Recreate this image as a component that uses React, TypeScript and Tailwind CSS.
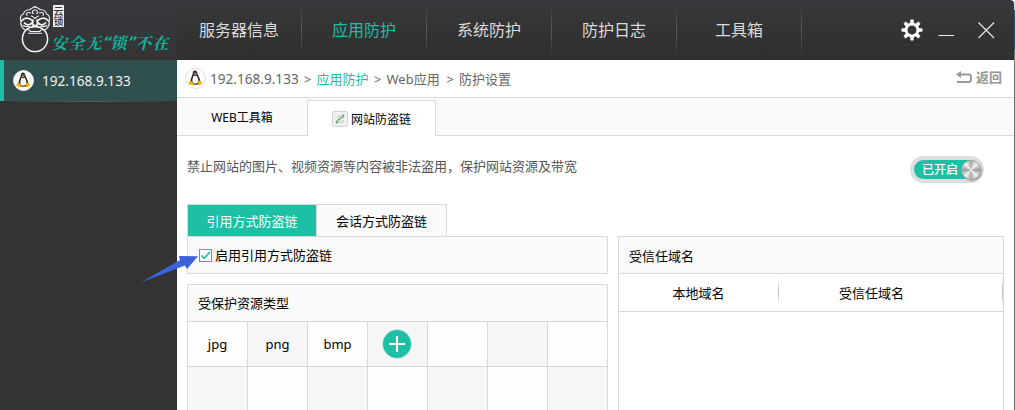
import React from "react";

const NAV = ["服务器信息", "应用防护", "系统防护", "防护日志", "工具箱"];
const CELLS = ["jpg", "png", "bmp", "+", "", "", ""];
const SLOGAN = ["安", "全", "无", "“", "锁", "”", "不", "在"];

function Tux({ ring }: { ring?: boolean }) {
  return (
    <svg width="21" height="21" viewBox="0 0 21 21" className="shrink-0">
      <circle cx="10.5" cy="10.5" r="10" fill="#fff" stroke={ring ? "#d4d4d4" : "#fff"} strokeWidth="0.8" />
      <path d="M7.8 5C7.8 1.5 12.3 1.5 12.3 5c0 2.3 3 5 3 8.200c0 2.300-2.200 3.600-4.900 3.600s-4.900-1.300-4.900-3.600c0-3.200 2.300-5.900 2.300-8.200z" fill="#1d1d1d" />
      <path d="M8.500 7.600c1.200.9 2.300.9 3.200 0c.6 1.700 1.800 3.200 1.800 5.200c0 2.300-1.500 3-3.200 3s-3-.7-3-3c0-2 .9-3.500 1.200-5.200z" fill="#f8f8f8" />
      <circle cx="9.300" cy="5" r=".6" fill="#ddd" />
      <circle cx="11" cy="5" r=".6" fill="#ddd" />
      <path d="M8.600 6.400l1.600-.7 1.500.7-1.500 1.200z" fill="#f5a700" />
      <path d="M5.500 12.300l2.900 3.200c.6 1.500-.5 2-1.700 1.700l-3-1c-.7-.4.3-1.200 0-2.200z" fill="#f7b500" />
      <path d="M13.400 13l1.800-.5 2.200 2.300c.3.700-2 2-3 2.400c-1.400.4-1.800-.7-1.300-2z" fill="#f7b500" />
    </svg>
  );
}

function Lion() {
  return (
    <svg width="32" height="48" viewBox="0 0 32 48" fill="none" stroke="#f3f3f3" strokeWidth="1.100" strokeLinecap="round" strokeLinejoin="round" className="shrink-0">
      <circle cx="16" cy="34" r="12.600" strokeWidth="1.500" />
      <path d="M6 25C2.500 22.500 1.300 19 2 16C.5 13 2 9.500 4.500 9C5 6 8 4.500 11 4.800C12 2.500 14.500 3 16 1.500C17.500 3 20 2.500 21 4.800C24 4.500 27 6 27.500 9C30 9.500 31.300 13 30 16C30.700 19 29.500 22.500 26 25" />
      <path d="M16 5c-3 0-3.500 3-1.500 3.500M16 5c3 0 3.500 3 1.500 3.500M11.500 8c-3-1.500-5 .5-3.500 2.500M20.500 8c3-1.500 5 .5 3.500 2.500M12.500 11c2 .5 2.500 2 3.500 2.500c1-.5 1.500-2 3.500-2.500" />
      <path d="M2.500 16c3-3.500 7-3.500 11-.5M29.500 16c-3-3.500-7-3.500-11-.5M5.500 18c2 2.500 5.500 2.500 7.500-.5M26.500 18c-2 2.500-5.500 2.500-7.500-.5M14 15l-.5 4.500c1 1.500 4 1.500 5 0l-.5-4.500" strokeWidth="1.700" />
      <path d="M4 20.500c2.500 2 4.500 0 6.500 1.500c2 1 3.500-.3 5.500-.3s3.500 1.300 5.500.3c2-1.500 4 .5 6.500-1.500M7.500 24c2 .5 3 1.500 4 2.500h9c1-1 2-2 4-2.500M9.500 28.300h13" />
    </svg>
  );
}

function Gear() {
  return (
    <svg width="22" height="22" viewBox="-11 -11 22 22" className="shrink-0">
      <circle r="5.900" fill="none" stroke="#fff" strokeWidth="2.800" />
      {[0, 45, 90, 135, 180, 225, 270, 315].map((a) => (
        <path key={a} d="M-2 -6.500L-1.500 -10.500H1.500L2 -6.500z" fill="#fff" transform={`rotate(${a})`} />
      ))}
    </svg>
  );
}

export default function App() {
  return (
    <div className="relative h-[410px] w-[1015px] overflow-hidden bg-white font-['Noto_Sans','Noto_Sans_CJK_SC',sans-serif] text-[13px] text-black">
      <div className="flex h-full">
        <aside className="flex w-[177px] shrink-0 flex-col rounded-tl-[3px] bg-[#333335]">
          <div className="flex h-[60px] bg-linear-to-b from-[#38393d] to-[#343437] pl-[19px] pt-[5px]">
            <Lion />
            <div className="flex flex-col pl-[2px]">
              <div className="flex h-[22px] w-[11px] items-center justify-center bg-[#eeeeee] font-['Noto_Sans_CJK_SC'] text-[10px] leading-[11px] font-medium text-[#343437] [writing-mode:vertical-rl]">
                云锁
              </div>
              <div className="mt-[4px] flex w-[116px] -skew-x-12 justify-between font-['Noto_Serif_CJK_SC','Noto_Sans_CJK_SC',sans-serif] text-[16px] leading-[23px] font-bold text-[#13b39c]">
                {SLOGAN.map((c, i) => (
                  <span key={i} className={c === "“" || c === "”" ? "w-[6px] font-['Noto_Sans']" : "w-[15px]"}>{c}</span>
                ))}
              </div>
            </div>
          </div>
          <div className="flex h-[41px] items-center border-l-4 border-[#1dbfa5] bg-[#30504f] pl-[9px]">
            <Tux />
            <span className="pl-[8px] pt-[1px] text-[13.600px] text-[#f2f2f2]">192.168.9.133</span>
          </div>
          <div className="h-px bg-linear-to-r from-[#333335] via-[#5a5b5d] to-[#333335]" />
        </aside>

        <main className="flex w-[837px] shrink-0 flex-col">
          <header className="flex h-[60px] shrink-0 rounded-tr-[4px] bg-linear-to-b from-[#38393d] via-[#333333] to-[#303030]">
            {NAV.map((n, i) => (
              <div key={n} className="flex w-[125px] items-stretch">
                <div className={i === 1 ? "flex-1 text-center text-[16px] leading-[61px] text-[#1dbfa5]" : "flex-1 text-center text-[16px] leading-[61px] text-[#dcdcdc]"}>{n}</div>
                <div className="my-[4px] w-px bg-linear-to-b from-transparent via-[#5d5d5d] to-transparent" />
              </div>
            ))}
            <div className="flex flex-1 items-center pl-[98.500px]">
              <Gear />
              <svg width="16" height="16" viewBox="0 0 16 16" className="ml-[15.500px]"><path d="M.500 13.500H16" stroke="#eee" /></svg>
              <svg width="17" height="17" viewBox="0 0 17 17" className="ml-[24px]"><path d="M.500 .500L16 16M16 .500L.500 16" stroke="#e8e8e8" strokeWidth="1.200" /></svg>
            </div>
          </header>

          <div className="flex h-[38px] shrink-0 items-center justify-between border-b border-[#d9d9d9] pl-[8px] pr-[12px] text-[#666]">
            <div className="flex items-center">
              <Tux ring />
              <div className="flex pt-[1px]">
                <span className="w-[98px] pl-[4px] text-[13.600px] leading-[20px]">192.168.9.133</span>
                <span className="w-[12.500px] leading-[20px]">&gt;</span>
                <span className="w-[57.500px] leading-[20px] text-[#1dbfa5]">应用防护</span>
                <span className="w-[12.500px] leading-[20px]">&gt;</span>
                <span className="w-[60px] leading-[20px]">Web应用</span>
                <span className="w-[12.500px] leading-[20px]">&gt;</span>
                <span className="leading-[20px]">防护设置</span>
              </div>
            </div>
            <div className="flex items-center gap-[4px] text-[#8c8c8c]">
              <svg width="16" height="14" viewBox="0 0 16 14" fill="none" className="-mt-[2px]"><path d="M4 3.500H12.500Q15 3.500 15 6V8.500Q15 11 12.500 11H1" stroke="#999" strokeWidth="2" /><path d="M0 3.500L5 0V7z" fill="#999" /></svg>
              <span className="-mt-[1px] font-bold text-[#969696]">返回</span>
            </div>
          </div>

          <div className="flex h-[38px] shrink-0 bg-[#fafafa] text-[12px]">
            <div className="w-[130px] border-b border-[#d9d9d9] text-center leading-[39px]">WEB工具箱</div>
            <div className="mt-[2px] flex w-[129px] items-center justify-center gap-[3px] rounded-t-[2px] border border-b-0 border-[#d9d9d9] bg-white">
              <svg width="16" height="16" viewBox="0 0 16 16" fill="none">
                <rect x=".500" y=".500" width="15" height="15" rx="1.500" fill="#f0f0f0" stroke="#d3d3d3" />
                <path d="M7.500 8.500L10 4.500Q11.500 3.500 12 4.500Q12 6 9.500 8M8 7.800L5 9.500Q3.500 11.500 4.500 12Q6 12.300 7.800 9.800" stroke="#2d9c5c" strokeWidth="1" />
                <path d="M5 5.500l2 1M7 4v1.500M9 11l2 1M10 9.500l2 .5" stroke="#f1a7a0" />
              </svg>
              <span className="pt-[2px]">网站防盗链</span>
            </div>
            <div className="flex-1 border-b border-[#d9d9d9]" />
          </div>

          <div className="flex h-[68px] shrink-0 items-start justify-between pl-[10px] pr-[30px] text-[#555]">
            <span className="pt-[21px]">禁止网站的图片、视频资源等内容被非法盗用，保护网站资源及带宽</span>
            <div className="mt-[20px] flex h-[27px] w-[74px] rounded-full bg-[#dedede] p-[4px]">
              <div className="flex h-[19px] w-full items-center justify-between rounded-full bg-[#1dbfa5] pl-[8px] text-[12px] font-medium text-white">
                <span>已开启</span>
                <span className="-mr-[1px] size-[20px] shrink-0 rounded-full border border-[#aaa] bg-[conic-gradient(#aaa,#f5f5f5_12%,#999_25%,#f5f5f5_38%,#aaa_50%,#f5f5f5_62%,#999_75%,#f5f5f5_88%,#aaa)] shadow-[1px_1px_1px_#999]" />
              </div>
            </div>
          </div>

          <div className="flex flex-1 justify-between pl-[10px] pr-[10px]">
            <section className="flex w-[421px] flex-col">
              <div className="flex h-[32px] w-[260px] shrink-0 border border-b-0 border-[#d9d9d9] bg-[#fafafa] leading-[32px]">
                <div className="h-[31px] w-[128px] bg-[#1dbfa5] text-center text-white">引用方式防盗链</div>
                <div className="h-[31px] flex-1 border-l border-[#d9d9d9] text-center">会话方式防盗链</div>
              </div>
              <div className="flex h-[38px] shrink-0 items-center border border-[#d9d9d9] bg-[#fafafa] pl-[11px]">
                <svg width="13" height="13" viewBox="0 0 13 13" fill="none"><rect x=".500" y=".500" width="12" height="12" fill="#fff" stroke="#1dbfa5" /><path d="M2.500 6.500L5.200 9.300L11 3" stroke="#1dbfa5" strokeWidth="1.700" /></svg>
                <span className="pl-[3px] pt-[2px]">启用引用方式防盗链</span>
              </div>
              <div className="mt-[10px] h-[38px] shrink-0 border border-[#d9d9d9] bg-[#fafafa] pl-[10px] leading-[37px]">受保护资源类型</div>
              <div className="grid grid-cols-7 border-l border-[#d9d9d9]">
                {CELLS.map((c, i) => (
                  <div key={i} className={i % 2 ? "flex h-[45px] items-center justify-center border-r border-b border-[#d9d9d9] bg-[#f6f6f6]" : "flex h-[45px] items-center justify-center border-r border-b border-[#d9d9d9] bg-[#fdfdfd]"}>
                    {c === "+" ? (
                      <svg width="30" height="30" viewBox="0 0 30 30" className="mr-[1px]"><circle cx="15" cy="15" r="14.300" fill="#1dbfa5" stroke="#b9dcd5" strokeWidth=".6" /><path d="M7 15H23M15 7V23" stroke="#fff" strokeWidth="2" /></svg>
                    ) : <span className="pt-[2px]">{c}</span>}
                  </div>
                ))}
                {CELLS.map((_, i) => (
                  <div key={i} className={i % 2 ? "h-[45px] border-r border-b border-[#d9d9d9] bg-[#fdfdfd]" : "h-[45px] border-r border-b border-[#d9d9d9] bg-[#f6f6f6]"} />
                ))}
              </div>
            </section>

            <section className="mt-[32px] flex w-[386px] flex-col border border-b-0 border-[#d9d9d9]">
              <div className="h-[37px] shrink-0 border-b border-[#d9d9d9] bg-[#fafafa] pl-[10px] leading-[38px]">受信任域名</div>
              <div className="flex h-[38px] shrink-0 border-b border-[#d9d9d9] leading-[38px]">
                <div className="w-[159px] text-center">本地域名</div>
                <div className="mt-[3px] h-[30px] w-px bg-linear-to-b from-transparent via-[#bbb] to-transparent" />
                <div className="w-[223px] pl-[60px]">受信任域名</div>
                <div className="mt-[3px] h-[30px] w-px bg-linear-to-b from-transparent via-[#bbb] to-transparent" />
              </div>
            </section>
          </div>
        </main>
        <div className="w-px bg-[#6f6f72]">
          <div className="h-[10px] bg-[#d8dadd]" />
          <div className="h-[40px] bg-[#2c5068]" />
        </div>
      </div>
      <svg className="absolute left-[141px] top-[255px]" width="58" height="28" viewBox="0 0 58 28"><path d="M.500 27L39 5L38 1L57 1.300L46 14L44 10.500L1 27z" fill="#3d62de" /></svg>
    </div>
  );
}
